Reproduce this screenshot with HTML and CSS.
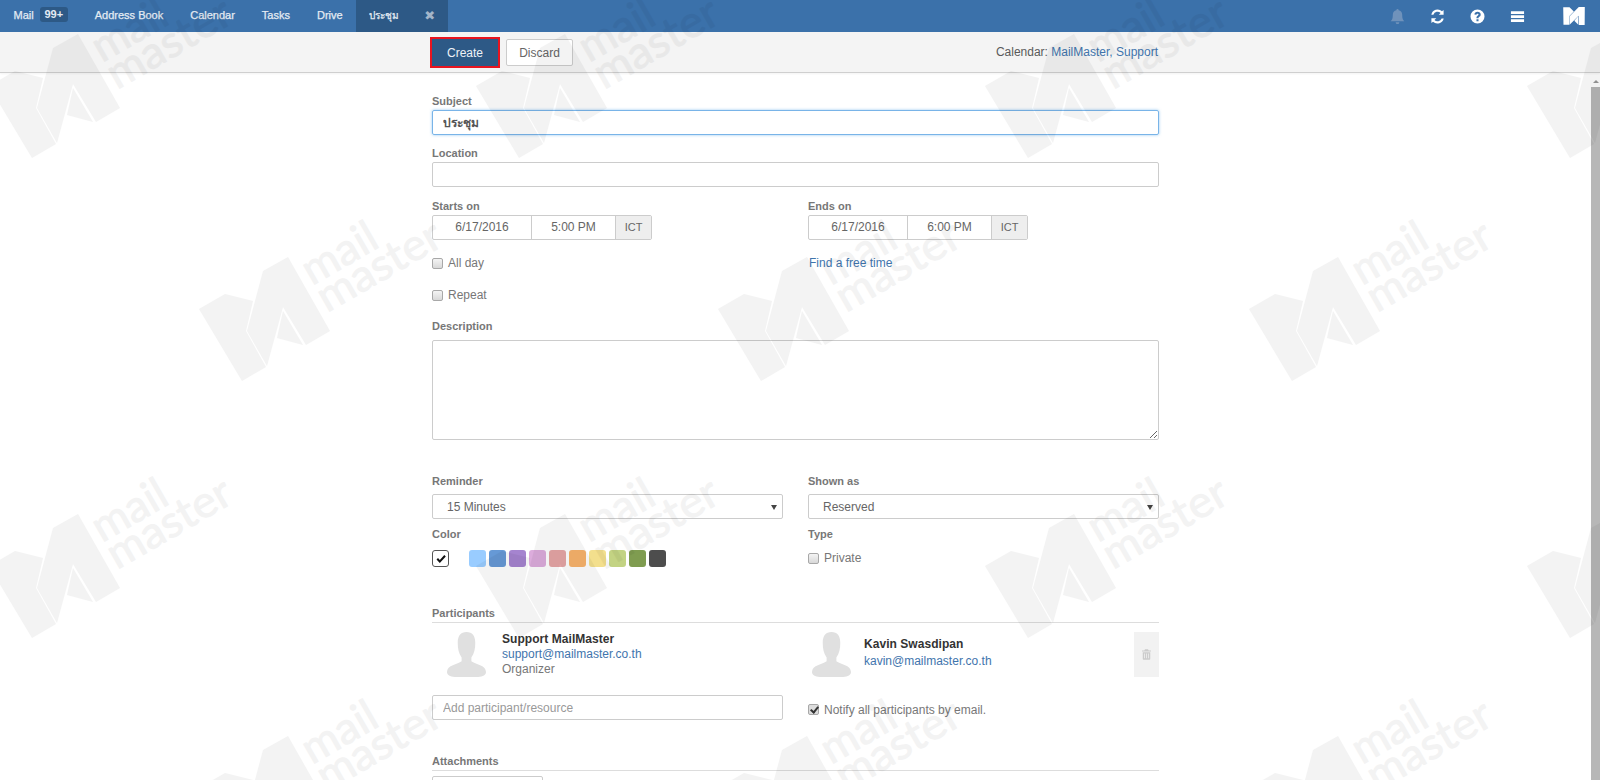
FILE: index.html
```html
<!DOCTYPE html>
<html lang="en">
<head>
<meta charset="utf-8">
<title>ประชุม</title>
<link rel="stylesheet" href="styles.css">
</head>
<body>
<nav class="nav">
  <a class="nav-item">Mail <span class="badge">99+</span></a>
  <a class="nav-item">Address Book</a>
  <a class="nav-item">Calendar</a>
  <a class="nav-item">Tasks</a>
  <a class="nav-item">Drive</a>
  <a class="nav-tab"><span class="tab-title">ประชุม</span><span class="tab-close">✖</span></a>
  <div class="nav-icons">
    <svg class="ico dim" viewBox="0 0 16 16"><path d="M8 0a1.2 1.2 0 0 1 1.2 1.3C11.6 1.8 13 3.6 13 6c0 4 .8 5.6 2.3 7H.7C2.200 11.600 3 10 3 6c0-2.400 1.400-4.200 3.800-4.700A1.200 1.200 0 0 1 8 0zM6 14h4a2 2 0 0 1-4 0z"/></svg>
    <svg class="ico" viewBox="0 0 16 16"><path d="M14.500 1v5.200H9.300l2-2A4.700 4.700 0 0 0 3.600 6H1.400a6.900 6.900 0 0 1 11.400-3.700zM1.500 15V9.800h5.200l-2 2A4.700 4.700 0 0 0 12.400 10h2.200a6.900 6.900 0 0 1-11.400 3.700z"/></svg>
    <svg class="ico" viewBox="0 0 16 16"><path fill-rule="evenodd" d="M8 .5a7.500 7.500 0 1 1 0 15 7.500 7.500 0 0 1 0-15zM6.900 11v2h2.200v-2zM8 3C6.100 3 4.900 4.100 4.700 5.800l2.100.3C6.900 5.400 7.300 5 8 5c.6 0 1.100.4 1.100.9 0 .5-.3.800-1 1.300-.9.600-1.200 1.200-1.200 2.100v.5h2.200v-.3c0-.5.200-.7.800-1.100 1-.7 1.500-1.400 1.500-2.600C11.400 4.100 9.900 3 8 3z"/></svg>
    <svg class="ico" viewBox="0 0 16 16"><path d="M1 2.300h14v2.900H1zM1 6.600h14v2.900H1zM1 10.900h14v2.900H1z"/></svg>
    <svg class="nav-logo" viewBox="-26 44 103 86"><g transform="rotate(30)"><path d="M0 52 26 37 54 44 47 74 67 110 43 124z"/><path d="M64 14 89 0 131 74 107 88 84 50 68 109 48 74z"/><path d="M84 54 78 81 104 88z"/></g></svg>
  </div>
</nav>

<header class="toolbar">
  <div class="toolbar-inner">
    <button class="btn btn-primary">Create</button>
    <button class="btn">Discard</button>
    <div class="calendar-info">Calendar: <a class="link">MailMaster, Support</a></div>
  </div>
</header>

<div class="body-row">
  <main class="main">
    <form class="form">
      <div class="field subject">
        <label class="label">Subject</label>
        <input class="input focus" type="text" value="ประชุม">
      </div>
      <div class="field">
        <label class="label">Location</label>
        <input class="input" type="text">
      </div>
      <div class="cols dates">
        <div>
          <label class="label">Starts on</label>
          <div class="dt-group">
            <span class="dt dt-date">6/17/2016</span><span class="dt dt-time">5:00 PM</span><span class="dt dt-tz">ICT</span>
          </div>
          <div class="check-row first"><input class="cb" type="checkbox"><span>All day</span></div>
          <div class="check-row"><input class="cb" type="checkbox"><span>Repeat</span></div>
        </div>
        <div>
          <label class="label">Ends on</label>
          <div class="dt-group">
            <span class="dt dt-date">6/17/2016</span><span class="dt dt-time">6:00 PM</span><span class="dt dt-tz">ICT</span>
          </div>
          <div class="check-row first free-time"><a class="link">Find a free time</a></div>
        </div>
      </div>
      <div class="field desc">
        <label class="label label-desc">Description</label>
        <textarea class="textarea"></textarea>
      </div>
      <div class="cols options">
        <div>
          <label class="label label-gap">Reminder</label>
          <div class="select"><span>15 Minutes</span></div>
          <label class="label color-label">Color</label>
          <div class="colors">
            <span class="color-check"><svg viewBox="0 0 12 12"><path d="M1.500 6.500 3 5l1.800 1.900L9.300 2l1.500 1.400-6 6.600z"/></svg></span>
            <span class="swatch s1"></span><span class="swatch s2"></span><span class="swatch s3"></span><span class="swatch s4"></span><span class="swatch s5"></span><span class="swatch s6"></span><span class="swatch s7"></span><span class="swatch s8"></span><span class="swatch s9"></span><span class="swatch s10"></span>
          </div>
        </div>
        <div>
          <label class="label label-gap">Shown as</label>
          <div class="select"><span>Reserved</span></div>
          <label class="label color-label">Type</label>
          <div class="check-row private"><input class="cb" type="checkbox"><span>Private</span></div>
        </div>
      </div>
      <section class="section participants">
        <div class="section-title">Participants</div>
        <div class="cols people">
          <div class="person">
            <svg class="avatar" viewBox="0 0 40 46"><path d="M20 0c6 0 9 4 9 11 0 6-1 11-4 15v4c4 3 15 4 15 11 0 3-3 5-8 5H8c-5 0-8-2-8-5 0-7 11-8 15-11v-4c-3-4-4-9-4-15 0-7 3-11 9-11z"/></svg>
            <div class="person-text">
              <div class="name">Support MailMaster</div>
              <a class="link email">support@mailmaster.co.th</a>
              <div class="role">Organizer</div>
            </div>
          </div>
          <div class="person second">
            <svg class="avatar" viewBox="0 0 40 46"><path d="M20 0c6 0 9 4 9 11 0 6-1 11-4 15v4c4 3 15 4 15 11 0 3-3 5-8 5H8c-5 0-8-2-8-5 0-7 11-8 15-11v-4c-3-4-4-9-4-15 0-7 3-11 9-11z"/></svg>
            <div class="person-text">
              <div class="name">Kavin Swasdipan</div>
              <a class="link email">kavin@mailmaster.co.th</a>
            </div>
            <span class="trash"><svg viewBox="0 0 12 14"><path d="M4 0h4l1 1.500h3V3H0V1.500h3zM1 4h10v8.500c0 .8-.6 1.500-1.300 1.500H2.300C1.600 14 1 13.300 1 12.500zm2 1.500V12h1V5.500zm2.500 0V12h1V5.500zm2.500 0V12h1V5.500z"/></svg></span>
          </div>
        </div>
        <div class="cols add-row">
          <input class="input" type="text" placeholder="Add participant/resource">
          <div class="check-row notify"><input class="cb on" type="checkbox" checked><span>Notify all participants by email.</span></div>
        </div>
      </section>
      <section class="section attachments">
        <div class="section-title">Attachments</div>
        <div class="attach-btn"></div>
      </section>
    </form>
  </main>
  <div class="scrollbar"><span class="sb-arrow"></span><span class="sb-thumb"></span></div>
</div>

<svg class="watermark" viewBox="0 0 1600 780" aria-hidden="true">
  <defs>
    <g id="wm">
      <path d="M0 52 26 37 54 44 47 74 67 110 43 124z"/>
      <path d="M64 14 89 0 131 74 107 88 84 50 68 109 48 74z"/>
      <path d="M84 54 78 81 104 88z"/>
      <g transform="translate(113 29) rotate(-30)"><text class="wm-text" textLength="80" lengthAdjust="spacingAndGlyphs">mail</text></g>
      <g transform="translate(128 56) rotate(-30)"><text class="wm-text" textLength="137" lengthAdjust="spacingAndGlyphs">master</text></g>
    </g>
  </defs>
  <use href="#wm" x="-11" y="34"/><use href="#wm" x="476" y="34"/><use href="#wm" x="985" y="34"/><use href="#wm" x="1527" y="34"/>
  <use href="#wm" x="199" y="257"/><use href="#wm" x="718" y="257"/><use href="#wm" x="1249" y="257"/>
  <use href="#wm" x="-11" y="514"/><use href="#wm" x="476" y="514"/><use href="#wm" x="985" y="514"/><use href="#wm" x="1527" y="514"/>
  <use href="#wm" x="199" y="736"/><use href="#wm" x="718" y="736"/><use href="#wm" x="1249" y="736"/>
</svg>
</body>
</html>
```
FILE: styles.css
```css
* { box-sizing: border-box; }
html, body { height: 100%; }
body {
  margin: 0;
  height: 780px;
  overflow: hidden;
  display: flex;
  flex-direction: column;
  position: relative;
  background: #fff;
  color: #666;
  font: 12px/16px "Liberation Sans", "Noto Sans", "DejaVu Sans", sans-serif;
}

/* top bar */
.nav {
  flex: none;
  height: 32px;
  display: flex;
  align-items: stretch;
  background: #3b71aa;
  color: #e4ebf3;
  font-size: 11px;
  line-height: 31px;
  -webkit-text-stroke: 0.25px #e4ebf3;
}
.nav-item { padding: 0 13.5px; white-space: nowrap; }
.badge {
  display: inline-block;
  margin-left: 3px;
  width: 28px;
  height: 15px;
  line-height: 15px;
  text-align: center;
  border-radius: 3px;
  background: #2d5986;
  font-size: 11px;
  font-weight: bold;
  vertical-align: 1px;
  -webkit-text-stroke: 0;
}
.nav-tab {
  display: flex;
  width: 92px;
  padding-left: 13px;
  background: #2d5986;
}
.tab-title { width: 55px; font-size: 10px; }
.tab-close { color: #a3b5c9; font-size: 13px; -webkit-text-stroke: 0; }
.nav-icons {
  margin-left: auto;
  display: flex;
  align-items: center;
  gap: 25px;
  padding-right: 15px;
}
.ico { width: 15px; height: 15px; fill: #fff; -webkit-text-stroke: 0; }
.ico.dim { fill: #6f92bb; margin-top: 1px; }
.nav-logo { width: 22px; height: 18px; margin-left: 13px; fill: #fff; }

/* toolbar */
.toolbar {
  flex: none;
  height: 41px;
  padding: 7px 9px 0 0;
  background: #f4f4f4;
  border-bottom: 1px solid #cfcfcf;
  box-shadow: 0 1px 2px rgba(0, 0, 0, .05);
}
.toolbar-inner {
  width: 727px;
  margin: 0 auto;
  display: flex;
  align-items: flex-start;
  gap: 7px;
}
.btn {
  height: 27px;
  width: 67px;
  padding: 0;
  border: 1px solid #ccc;
  border-radius: 2px;
  background: #fff;
  color: #666;
  font: inherit;
}
.btn-primary {
  width: 66px;
  margin-right: 1px;
  background: #2d5986;
  border-color: #2d5986;
  border-radius: 0;
  color: #eef2f7;
  outline: 2px solid #e8141f;
}
.calendar-info { margin-left: auto; padding-right: 1px; line-height: 26px; color: #5a5a5a; }
.link { color: #3f75ad; }

/* form */
.body-row { flex: 1; min-height: 0; display: flex; }
.main { flex: 1; min-width: 0; overflow: hidden; }
.form { width: 727px; margin: 0 auto; padding-top: 21px; }
.label {
  display: block;
  height: 16px;
  line-height: 14px;
  font-size: 11px;
  font-weight: bold;
  color: #777;
}
.label-gap { height: 20px; }
.label-desc { height: 21px; }
.field { margin-bottom: 12px; }
.subject { margin-bottom: 11px; }
.input, .textarea, .select, .dt-group {
  display: block;
  width: 100%;
  border: 1px solid #ccc;
  border-radius: 2px;
  background: transparent;
  font: inherit;
  color: #666;
}
.input { height: 25px; padding: 0 10px; }
.input::placeholder { color: #999; opacity: 1; }
.focus {
  border-color: #79b4e8;
  box-shadow: 0 0 3px rgba(102, 175, 233, .7);
  font-weight: bold;
  color: #555;
}
.cols { display: grid; grid-template-columns: 351px 351px; column-gap: 25px; }
.dt-group { display: flex; width: 220px; height: 25px; line-height: 23px; text-align: center; }
.dt { display: block; }
.dt-date { width: 99px; border-right: 1px solid #ccc; }
.dt-time { width: 84px; border-right: 1px solid #ccc; }
.dt-tz { flex: 1; background: #eee; font-size: 11px; }
.check-row { display: flex; align-items: center; height: 18px; margin-top: 14px; color: #777; }
.free-time { padding-left: 1px; }
.cb {
  appearance: none;
  flex: none;
  width: 11px;
  height: 11px;
  margin: 0 5px 0 0;
  border: 1px solid #a8a8a8;
  border-radius: 2px;
  background: linear-gradient(#f4f4f4, #d8d8d8);
}
.cb.on { position: relative; background: #dcdcdc; }
.cb.on::after {
  content: "";
  position: absolute;
  left: 3px;
  top: 0;
  width: 3px;
  height: 6px;
  border: solid #333;
  border-width: 0 2px 2px 0;
  transform: rotate(40deg);
}
.desc { margin-top: 15px; margin-bottom: 34px; }
.textarea { height: 100px; resize: both; }
.select { position: relative; height: 25px; line-height: 24px; padding-left: 14px; }
.select::after {
  content: "";
  position: absolute;
  right: 5px;
  top: 10px;
  border: 3.5px solid transparent;
  border-top: 5px solid #444;
  border-bottom: 0;
}
.color-label { margin-top: 8px; }
.colors { display: flex; align-items: center; margin-top: 7px; height: 17px; }
.color-check {
  display: flex;
  align-items: center;
  justify-content: center;
  width: 17px;
  height: 17px;
  margin-right: 20px;
  border: 1px solid #555;
  border-radius: 3px;
}
.color-check svg { width: 12px; height: 12px; fill: #111; }
.swatch { width: 17px; height: 17px; margin-right: 3px; border-radius: 3px; }
.s1 { background: #99ccff; }
.s2 { background: #6699d6; }
.s3 { background: #a584cf; }
.s4 { background: #dcacdc; }
.s5 { background: #e5a5a5; }
.s6 { background: #f8b36c; }
.s7 { background: #f3df8d; }
.s8 { background: #c3d383; }
.s9 { background: #7f9c50; }
.s10 { background: #4d4d4d; }
.private { margin-top: 6px; }

.section-title {
  height: 17px;
  line-height: 14px;
  font-size: 11px;
  font-weight: bold;
  color: #777;
  border-bottom: 1px solid #ddd;
}
.participants { margin-top: 39px; }
.people { height: 72px; }
.person { display: flex; align-items: flex-start; padding-top: 9px; position: relative; }
.avatar { width: 39px; height: 45px; margin: 0 16px 0 15px; fill: #e0e0e0; flex: none; }
.person.second .avatar { margin-left: 4px; margin-right: 13px; }
.person-text { line-height: 15px; }
.second .person-text { padding-top: 4px; line-height: 17px; }
.name { font-weight: bold; color: #333; letter-spacing: .05px; }
.email { display: block; }
.role { color: #777; }
.trash {
  position: absolute;
  right: 0;
  top: 9px;
  display: flex;
  align-items: center;
  justify-content: center;
  width: 25px;
  height: 45px;
  background: #f2f2f2;
}
.trash svg { width: 9px; height: 11px; fill: #ccc; }
.add-row { align-items: center; }
.notify { margin-top: 4px; }
.attachments { margin-top: 34px; }
.attach-btn {
  width: 111px;
  height: 30px;
  margin-top: 5px;
  border: 1px solid #ccc;
  border-radius: 2px;
}

/* scrollbar */
.scrollbar { flex: none; width: 9px; display: flex; flex-direction: column; align-items: center; padding-top: 7px; }
.sb-arrow {
  flex: none;
  border: 3px solid transparent;
  border-bottom: 3px solid #999;
  border-top: 0;
  margin-bottom: 4px;
}
.sb-thumb { flex: 1; width: 100%; background: #b7b7b7; }

/* watermark */
.watermark {
  position: absolute;
  left: 0;
  top: 0;
  width: 1600px;
  height: 780px;
  pointer-events: none;
  fill: #000;
  opacity: .042;
}
.wm-text {
  font: 44px Lato, "Noto Sans", sans-serif;
  stroke: #000;
  stroke-width: 1px;
  stroke-linejoin: round;
}
```
